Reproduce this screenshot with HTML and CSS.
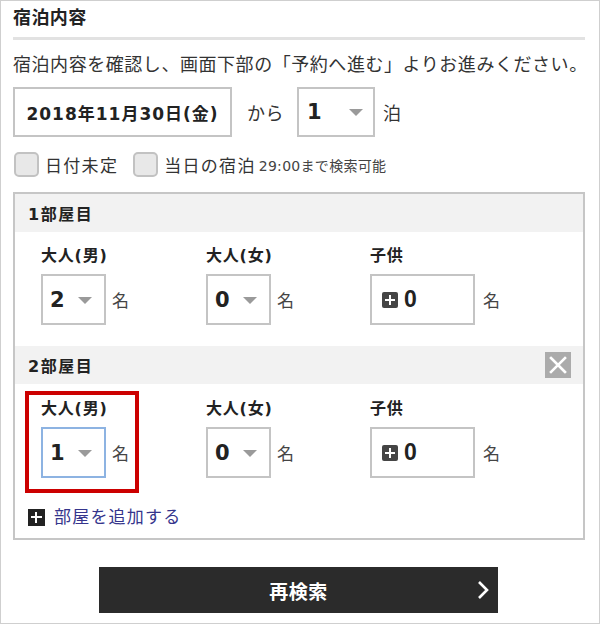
FILE: index.html
```html
<!DOCTYPE html>
<html lang="ja">
<head>
<meta charset="utf-8">
<title>宿泊内容</title>
<link rel="stylesheet" href="styles.css">
</head>
<body>
<div class="frame">
  <h1 class="title">宿泊内容</h1>
  <p class="desc">宿泊内容を確認し、画面下部の「予約へ進む」よりお進みください。</p>

  <div class="date-row">
    <div class="date-box">2018年11月30日(金)</div>
    <span class="word from">から</span>
    <div class="select nights"><span class="val">1</span><span class="tri"></span></div>
    <span class="word haku">泊</span>
  </div>

  <div class="check-row">
    <label class="check"><span class="box"></span><span class="ctext">日付未定</span></label>
    <label class="check"><span class="box"></span><span class="ctext">当日の宿泊</span><span class="note">29:00まで検索可能</span></label>
  </div>

  <div class="panel">
    <div class="room">
      <div class="room-head"><span class="room-title">1部屋目</span></div>
      <div class="room-body">
        <div class="field">
          <div class="flabel">大人(男)</div>
          <div class="fline"><div class="select small"><span class="val">2</span><span class="tri"></span></div><span class="unit">名</span></div>
        </div>
        <div class="field">
          <div class="flabel">大人(女)</div>
          <div class="fline"><div class="select small"><span class="val">0</span><span class="tri"></span></div><span class="unit">名</span></div>
        </div>
        <div class="field">
          <div class="flabel">子供</div>
          <div class="fline"><div class="child-box"><span class="plus-ico"></span><span class="cval">0</span></div><span class="unit">名</span></div>
        </div>
      </div>
    </div>

    <div class="room">
      <div class="room-head"><span class="room-title">2部屋目</span>
        <span class="close"><svg width="18" height="18" viewBox="0 0 18 18"><path d="M2 2 L16 16 M16 2 L2 16" stroke="#fff" stroke-width="2.6" stroke-linecap="square"/></svg></span>
      </div>
      <div class="room-body">
        <div class="field hl-field">
          <div class="flabel">大人(男)</div>
          <div class="fline"><div class="select small focus"><span class="val">1</span><span class="tri"></span></div><span class="unit">名</span></div>
          <div class="highlight"></div>
        </div>
        <div class="field">
          <div class="flabel">大人(女)</div>
          <div class="fline"><div class="select small"><span class="val">0</span><span class="tri"></span></div><span class="unit">名</span></div>
        </div>
        <div class="field">
          <div class="flabel">子供</div>
          <div class="fline"><div class="child-box"><span class="plus-ico"></span><span class="cval">0</span></div><span class="unit">名</span></div>
        </div>
      </div>
      <div class="add-room"><span class="add-ico"></span><span class="add-text">部屋を追加する</span></div>
    </div>
  </div>

  <div class="btn">
    <span class="btn-text">再検索</span>
    <svg class="chev" width="12" height="20" viewBox="0 0 12 20"><path d="M2 2 L10 10 L2 18" fill="none" stroke="#fff" stroke-width="2.6"/></svg>
  </div>
</div>
</body>
</html>
```

FILE: styles.css
```css
* { box-sizing: border-box; }
html, body { margin: 0; padding: 0; background: #fff; }
body {
  font-family: "DejaVu Sans", "Noto Sans CJK JP", sans-serif;
  color: #333;
}
.frame {
  width: 600px;
  height: 624px;
  border: 1px solid #cfcfcf;
  padding: 0 14px 0 12px;
}
.title {
  margin: 0;
  padding: 5px 0 7px 0;
  font-size: 18px;
  line-height: 24px;
  font-weight: bold;
  letter-spacing: 0.4px;
  color: #222;
  border-bottom: 3px solid #e2e2e2;
}
.desc {
  margin: 12px 0 0 0;
  font-size: 18px;
  line-height: 26px;
  letter-spacing: 0.55px;
  color: #333;
  white-space: nowrap;
}
.date-row {
  margin-top: 9px;
  display: flex;
  align-items: center;
  height: 50px;
}
.date-box {
  width: 219px;
  height: 50px;
  border: 2px solid #c4c4c4;
  display: flex;
  align-items: center;
  justify-content: center;
  font-weight: bold;
  font-size: 17px;
  color: #222;
  letter-spacing: 1px;
}
.word {
  font-size: 18px;
  letter-spacing: 0.5px;
  color: #333;
}
.from { margin-left: 15px; width: 50px; }
.haku { margin-left: 8px; }
.select {
  position: relative;
  border: 2px solid #c4c4c4;
  display: flex;
  align-items: center;
  background: #fff;
}
.select .val {
  font-weight: bold;
  font-size: 21px;
  color: #222;
}
.select .tri {
  position: absolute;
  top: 50%;
  margin-top: -3px;
  width: 0;
  height: 0;
  border-left: 7px solid transparent;
  border-right: 7px solid transparent;
  border-top: 7px solid #9a9a9a;
}
.nights { width: 78px; height: 50px; padding-left: 8px; }
.nights .tri { right: 10px; }
.check-row {
  margin-top: 15px;
  display: flex;
  align-items: center;
  height: 25px;
}
.check { display: flex; align-items: center; margin-right: 14px; }
.check .box {
  width: 25px;
  height: 25px;
  border: 2px solid #c2c2c2;
  border-radius: 5px;
  background: #e8e8e8;
  margin-left: 1px;
}
.ctext {
  margin-left: 6px;
  font-size: 17px;
  letter-spacing: 1.3px;
  color: #333;
}
.note {
  margin-left: 3px;
  font-size: 14px;
  color: #444;
  letter-spacing: 0.3px;
}
.panel {
  margin-top: 15px;
  border: 2px solid #c6c6c6;
  position: relative;
}
.room-head {
  height: 38px;
  background: #f2f2f2;
  display: flex;
  align-items: center;
  justify-content: space-between;
  padding: 0 12px 0 13px;
}
.room-title {
  font-size: 16px;
  font-weight: bold;
  letter-spacing: 1.5px;
  color: #222;
}
.close {
  width: 26px;
  height: 26px;
  background: #ababab;
  display: flex;
  align-items: center;
  justify-content: center;
}
.room-body {
  display: grid;
  grid-template-columns: 165px 164px auto;
  padding: 12px 0 21px 26px;
}
.room + .room .room-body { padding-bottom: 0; padding-top: 13px; }
.field { position: relative; }
.flabel {
  font-size: 16px;
  line-height: 24px;
  font-weight: bold;
  letter-spacing: 0.8px;
  color: #222;
}
.fline {
  margin-top: 6px;
  display: flex;
  align-items: center;
}
.select.small {
  width: 65px;
  height: 51px;
  padding-left: 7px;
}
.select.small .tri { right: 12px; }
.select.focus { border: 2px solid #8db3e2; }
.unit {
  margin-left: 6px;
  font-size: 17px;
  color: #444;
}
.child-box {
  width: 105px;
  height: 51px;
  border: 2px solid #c4c4c4;
  display: flex;
  align-items: center;
  padding-left: 10px;
}
.plus-ico {
  position: relative;
  width: 16px;
  height: 16px;
  border-radius: 2px;
  background: #454545;
}
.plus-ico::before, .plus-ico::after {
  content: "";
  position: absolute;
  background: #fff;
}
.plus-ico::before { left: 3px; top: 7px; width: 10px; height: 2px; }
.plus-ico::after { left: 7px; top: 3px; width: 2px; height: 10px; }
.cval {
  margin-left: 6px;
  font-family: "Liberation Sans", "Noto Sans CJK JP", sans-serif;
  font-weight: bold;
  font-size: 23px;
  color: #222;
}
.child-box + .unit { margin-left: 8px; }
.highlight {
  position: absolute;
  left: -16px;
  top: -6px;
  width: 114px;
  height: 102px;
  border: 4px solid #cc0000;
}
.add-room {
  display: flex;
  align-items: center;
  padding: 27px 0 9px 13px;
  line-height: 24px;
}
.add-ico {
  position: relative;
  width: 17px;
  height: 17px;
  background: #222;
}
.add-ico::before, .add-ico::after {
  content: "";
  position: absolute;
  background: #fff;
}
.add-ico::before { left: 3px; top: 7px; width: 11px; height: 2px; }
.add-ico::after { left: 7px; top: 3px; width: 2px; height: 11px; }
.add-text {
  margin-left: 9px;
  font-size: 17px;
  letter-spacing: 1.2px;
  color: #35358c;
}
.btn {
  position: relative;
  margin: 27px 0 0 86px;
  width: 399px;
  height: 46px;
  background: #2b2b2b;
  display: flex;
  align-items: center;
  justify-content: center;
}
.btn-text {
  color: #fff;
  font-weight: bold;
  font-size: 19px;
  letter-spacing: 0.5px;
}
.chev {
  position: absolute;
  right: 9px;
  top: 13px;
}
```
